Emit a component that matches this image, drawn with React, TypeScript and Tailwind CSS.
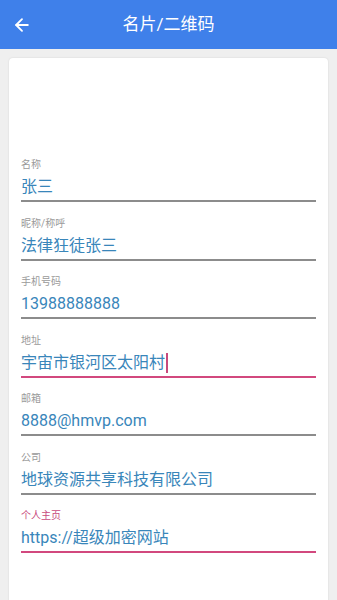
import { ArrowLeft } from "lucide-react";

type Field = {
    label: string;
    value: string;
    active?: boolean;
    cursor?: boolean;
};

const fields: Field[] = [
    { label: "名称", value: "张三" },
    { label: "昵称/称呼", value: "法律狂徒张三" },
    { label: "手机号码", value: "13988888888" },
    { label: "地址", value: "宇宙市银河区太阳村", active: true, cursor: true },
    { label: "邮箱", value: "8888@hmvp.com" },
    { label: "公司", value: "地球资源共享科技有限公司" },
    { label: "个人主页", value: "https://超级加密网站", active: true },
];

const FieldRow = ({ field }: { field: Field }) => {
    return (
        <div className="flex flex-col h-[58.5px]">
            <span className={`text-[10px] leading-[14px] ${field.label === "个人主页" ? "text-[#c8497c]" : "text-[#9a9a9a]"}`}>
                {field.label}
            </span>
            <div className="flex items-center h-[24px] mt-[3px]">
                <span className="text-[16px] leading-[24px] text-[#3986ba]">{field.value}</span>
                {field.cursor && <span className="w-[2px] h-[20px] bg-[#c8497c] ml-[1px]" />}
            </div>
            <div className={`h-[2px] mt-[1px] ${field.active ? "bg-[#d2487e]" : "bg-[#8c8c8c]"}`} />
        </div>
    );
};

const App = () => {
    return (
        <div className="w-[337px] h-[600px] overflow-hidden bg-[#efefef] font-['Roboto','Noto_Sans_CJK_SC',sans-serif]">
            <div className="h-[49px] bg-[#3f80ea] flex items-center relative">
                <ArrowLeft className="ml-[12px] text-white" size={20} strokeWidth={2.2} />
                <span className="absolute left-0 right-0 text-center text-white text-[17px] pointer-events-none">
                    名片/二维码
                </span>
            </div>
            <div className="mx-[9px] mt-[9px] bg-white rounded-[4px] shadow-[0_0_2px_rgba(0,0,0,0.12)] px-[12px] pt-[100px] h-[560px]">
                {fields.map((field) => (
                    <FieldRow key={field.label} field={field} />
                ))}
            </div>
        </div>
    );
};

export default App;
